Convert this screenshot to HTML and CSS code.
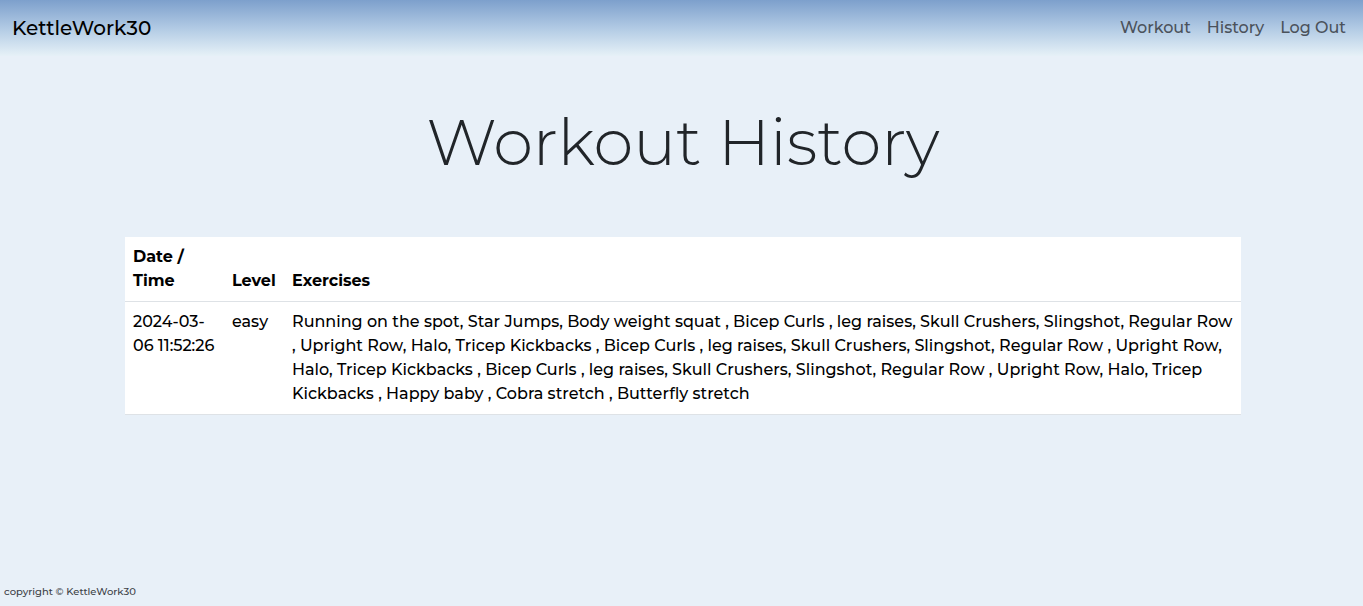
FILE: index.html
```html
<!DOCTYPE html>
<html lang="en">
<head>
<meta charset="utf-8">
<meta name="viewport" content="width=device-width, initial-scale=1">
<title>KettleWork30</title>
<link rel="stylesheet" href="styles.css">
</head>
<body>
<nav class="navbar">
  <a class="brand" href="#">KettleWork30</a>
  <div class="nav-links">
    <a href="#">Workout</a>
    <a href="#">History</a>
    <a href="#">Log Out</a>
  </div>
</nav>
<main class="main">
  <h1 class="title">Workout History</h1>
  <table class="history">
    <thead>
      <tr><th class="date">Date /<br>Time</th><th class="level">Level</th><th>Exercises</th></tr>
    </thead>
    <tbody>
      <tr>
        <td>2024-03-<br>06 11:52:26</td>
        <td>easy</td>
        <td>Running on the spot, Star Jumps, Body weight squat , Bicep Curls , leg raises, Skull Crushers, Slingshot, Regular Row , Upright Row, Halo, Tricep Kickbacks , Bicep Curls , leg raises, Skull Crushers, Slingshot, Regular Row , Upright Row, Halo, Tricep Kickbacks , Bicep Curls , leg raises, Skull Crushers, Slingshot, Regular Row , Upright Row, Halo, Tricep Kickbacks , Happy baby , Cobra stretch , Butterfly stretch</td>
      </tr>
    </tbody>
  </table>
</main>
<footer class="footer">copyright © KettleWork30</footer>
</body>
</html>
```
FILE: styles.css
```css
* { box-sizing: border-box; }
body {
  margin: 0;
  min-height: 100vh;
  display: flex;
  flex-direction: column;
  background: #e8f0f8;
  color: #212529;
  font-family: Montserrat, Inter, sans-serif;
  font-size: 16px;
  font-weight: 500;
  line-height: 24px;
}
.navbar {
  display: flex;
  align-items: center;
  justify-content: space-between;
  height: 56px;
  padding: 0 17px 0 12px;
  background: linear-gradient(#7da0cc, #b1cae4 50%, #e6f1f7);
}
.navbar a { text-decoration: none; }
.brand { color: #000; font-size: 20px; line-height: 30px; }
.nav-links { display: flex; gap: 16px; }
.nav-links a { color: #4b525b; }
.main { flex: 1; padding: 0 122px 0 125px; }
.title {
  margin: 48px 0 56px;
  text-align: center;
  font-size: 64px;
  font-weight: 300;
  line-height: 77px;
}
.history {
  width: 100%;
  border-collapse: collapse;
  background: #fff;
  color: #000;
}
.history th, .history td {
  padding: 8px;
  text-align: left;
  border-bottom: 1px solid #dee2e6;
}
.history th { vertical-align: bottom; font-weight: 700; }
.history td { vertical-align: top; }
.date { width: 99px; }
.level { width: 60px; }
.footer { padding: 0 4px 6px; color: #3c4146; font-size: 10px; line-height: 16px; }
```
